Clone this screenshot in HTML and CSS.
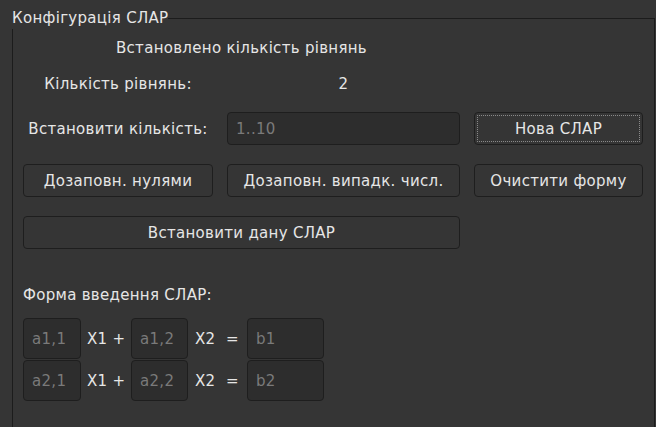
FILE: index.html
```html
<!DOCTYPE html>
<html lang="uk">
<head>
<meta charset="utf-8">
<title>Конфігурація СЛАР</title>
<link rel="stylesheet" href="styles.css">
</head>
<body>
<div class="group">
  <div class="group-head">
    <span class="group-title">Конфігурація СЛАР</span>
    <span class="group-line"></span>
  </div>
  <div class="group-body">
    <div class="status-row">Встановлено кількість рівнянь</div>
    <div class="count-row">
      <span class="cell">Кількість рівнянь:</span>
      <span class="cell">2</span>
    </div>
    <div class="controls">
      <span class="cell">Встановити кількість:</span>
      <input class="field" type="text" placeholder="1..10">
      <button class="btn focused">Нова СЛАР</button>
      <button class="btn">Дозаповн. нулями</button>
      <button class="btn">Дозаповн. випадк. числ.</button>
      <button class="btn">Очистити форму</button>
      <button class="btn wide">Встановити дану СЛАР</button>
    </div>
    <div class="form-label">Форма введення СЛАР:</div>
    <div class="equations">
      <div class="eq">
        <input class="coef" type="text" placeholder="a1,1">
        <span class="term">X1 +</span>
        <input class="coef c2" type="text" placeholder="a1,2">
        <span class="var">X2</span>
        <span class="eqsign">=</span>
        <input class="coef rhs" type="text" placeholder="b1">
      </div>
      <div class="eq">
        <input class="coef" type="text" placeholder="a2,1">
        <span class="term">X1 +</span>
        <input class="coef c2" type="text" placeholder="a2,2">
        <span class="var">X2</span>
        <span class="eqsign">=</span>
        <input class="coef rhs" type="text" placeholder="b2">
      </div>
    </div>
  </div>
</div>
</body>
</html>
```
FILE: styles.css
```css
* { box-sizing: border-box; }
html, body {
  margin: 0;
  height: 100%;
  background: #353535;
  overflow: hidden;
}
body {
  font-family: "DejaVu Sans", sans-serif;
  font-size: 15px;
  letter-spacing: 0.3px;
  color: #e6e6e6;
}
.group {
  margin: 8px 1px 0 12px;
}
.group-head {
  display: flex;
  height: 21px;
}
.group-title {
  line-height: 21px;
  white-space: nowrap;
}
.group-line {
  flex: 1;
  margin-top: 10px;
  border-top: 1px solid #1c1c1c;
  border-right: 1px solid #1c1c1c;
}
.group-body {
  border-left: 1px solid #1c1c1c;
  border-right: 1px solid #1c1c1c;
  padding: 0 10px;
  height: 398px;
}
.status-row {
  width: 437px;
  height: 38px;
  display: flex;
  align-items: center;
  justify-content: center;
}
.count-row {
  display: grid;
  grid-template-columns: 190px 233px;
  column-gap: 14px;
  height: 34px;
  align-items: center;
}
.cell {
  text-align: center;
  white-space: nowrap;
}
.controls {
  margin-top: 11px;
  display: grid;
  grid-template-columns: 190px 233px 169px;
  grid-auto-rows: 33px;
  column-gap: 14px;
  row-gap: 19px;
  align-items: center;
}
.field, .coef {
  font-family: "DejaVu Sans", sans-serif;
  font-size: 15px;
  letter-spacing: 0.3px;
  color: #e6e6e6;
  background: #2d2d2d;
  border: 1px solid #1e1e1e;
  border-radius: 4px;
  padding: 0 8px;
  outline: none;
}
.field { height: 33px; width: 100%; }
.field::placeholder, .coef::placeholder { color: #7a7a7a; }
.btn {
  font-family: "DejaVu Sans", sans-serif;
  font-size: 15px;
  letter-spacing: 0.3px;
  color: #e6e6e6;
  background: #353535;
  border: 1px solid #1e1e1e;
  border-radius: 4px;
  height: 33px;
  width: 100%;
  padding: 0;
}
.btn.focused {
  outline: 1px dotted #8a8a8a;
  outline-offset: -4px;
}
.btn.wide { grid-column: 1 / 3; }
.form-label {
  margin-top: 38px;
  height: 17px;
  line-height: 17px;
}
.equations {
  margin-top: 14px;
  display: flex;
  flex-direction: column;
  gap: 1px;
}
.eq {
  display: flex;
  align-items: center;
  height: 41px;
}
.coef { width: 58px; height: 41px; }
.coef.c2 { width: 57px; }
.coef.rhs { width: 77px; }
.term { width: 50px; padding-left: 6px; white-space: nowrap; }
.var { width: 37px; padding-left: 7px; }
.eqsign { width: 22px; padding-left: 1px; }
```
